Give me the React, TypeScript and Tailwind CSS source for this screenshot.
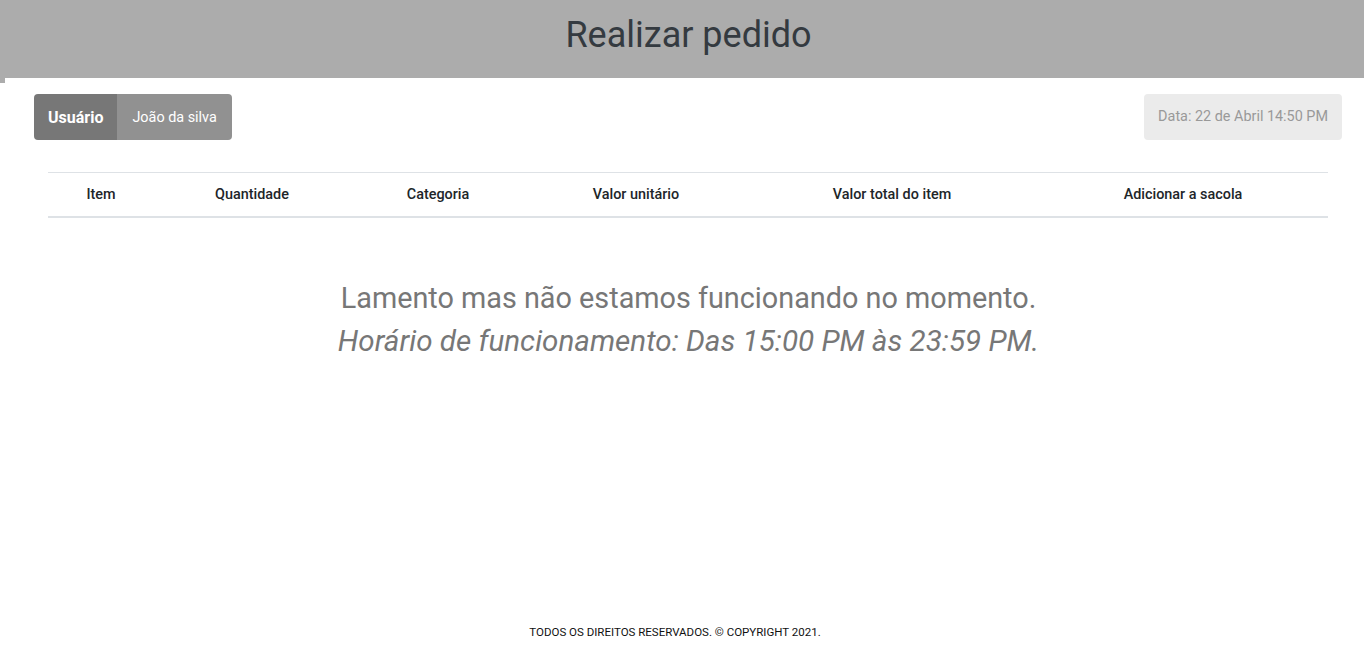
export default function App() {
  const cols: [string, string][] = [
    ["Item", "w-[106px]"],
    ["Quantidade", "w-[196px]"],
    ["Categoria", "w-[176px]"],
    ["Valor unitário", "w-[220px]"],
    ["Valor total do item", "w-[292px]"],
    ["Adicionar a sacola", "w-[290px]"],
  ];
  return (
    <div className="min-h-[649px] flex flex-col bg-white" style={{ fontFamily: "Roboto, 'Liberation Sans', sans-serif" }}>
      <div className="relative h-[78px] bg-[#acacac] flex items-center justify-center pl-[13px]">
        <h1 className="text-[36px] leading-none text-[#343a40] font-normal -mt-[8px]">Realizar pedido</h1>
        <div className="absolute left-0 top-[78px] w-[5px] h-[5px] bg-[#acacac]"></div>
      </div>
      <div className="flex justify-between items-start pl-[34px] pr-[22px] pt-[16px]">
        <div className="flex h-[46px] rounded-[4px] overflow-hidden text-white text-[14.4px]">
          <div className="bg-[#777777] px-[14px] pt-[2px] flex items-center font-bold text-[16px]">Usuário</div>
          <div className="bg-[#919191] px-[15px] pt-[2px] flex items-center">João da silva</div>
        </div>
        <div className="h-[46px] bg-[#ebebeb] rounded-[4px] px-[14px] flex items-center text-[14.4px] text-[#999]">
          Data: 22 de Abril 14:50 PM
        </div>
      </div>
      <div className="ml-[48px] mr-[36px] mt-[32px] border-t border-[#dee2e6] border-b-2 h-[46px] flex items-center">
        {cols.map(([t, w]) => (
          <div key={t} className={`${w} shrink-0 text-center text-[14.4px] font-medium text-[#212529]`}>{t}</div>
        ))}
      </div>
      <div className="mt-[59px] pl-[13px] text-center text-[28.8px] leading-[43px] text-[#777]">
        <div>Lamento mas não estamos funcionando no momento.</div>
        <div className="italic text-[29.6px]">Horário de funcionamento: Das 15:00 PM às 23:59 PM.</div>
      </div>
      <div className="mt-auto pb-[8px] text-center text-[11.5px] text-[#111] pr-[14px]">
        TODOS OS DIREITOS RESERVADOS. © COPYRIGHT 2021.
      </div>
    </div>
  );
}
